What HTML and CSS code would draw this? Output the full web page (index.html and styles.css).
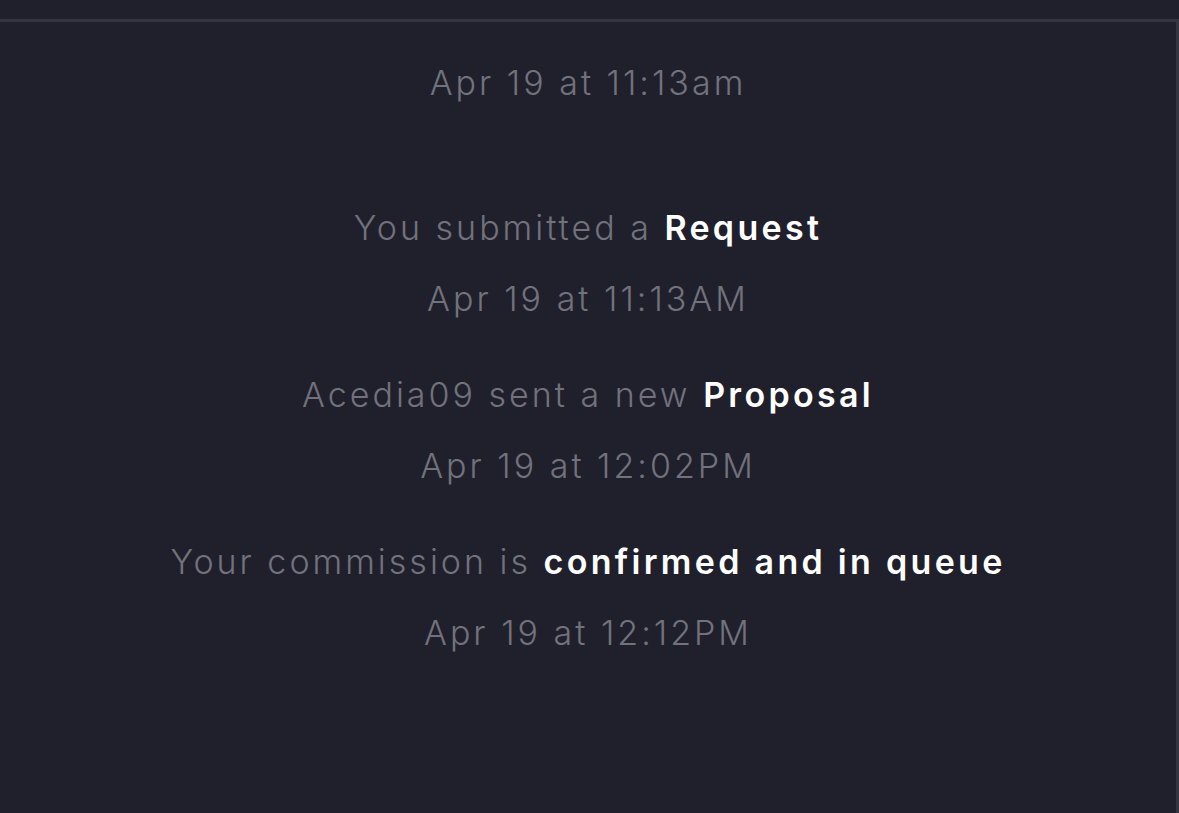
FILE: index.html
```html
<!DOCTYPE html>
<html>
<head>
<meta charset="utf-8">
<link rel="stylesheet" href="styles.css">
</head>
<body>
<div class="topbar"></div>
<div class="panel">
  <div class="stamp">Apr 19 at 11:13am</div>
  <div class="events">
    <div class="event">
      <div class="msg">You submitted a <b>Request</b></div>
      <div class="stamp">Apr 19 at 11:13AM</div>
    </div>
    <div class="event">
      <div class="msg">Acedia09 sent a new <b>Proposal</b></div>
      <div class="stamp">Apr 19 at 12:02PM</div>
    </div>
    <div class="event">
      <div class="msg">Your commission is <b>confirmed and in queue</b></div>
      <div class="stamp">Apr 19 at 12:12PM</div>
    </div>
  </div>
</div>
</body>
</html>
```
FILE: styles.css
```css
html, body {
  margin: 0;
  padding: 0;
  height: 100%;
  background: #20202c;
  overflow: hidden;
}
body {
  display: flex;
  flex-direction: column;
  font-family: Inter, "Liberation Sans", sans-serif;
  color: #72727c;
}
.topbar {
  height: 19px;
  flex: none;
}
.panel {
  flex: 1;
  border-top: 3px solid #343541;
  border-right: 3px solid #343541;
  display: flex;
  flex-direction: column;
  align-items: center;
  padding-top: 37px;
}
.stamp, .msg {
  font-size: 34px;
  line-height: 48px;
  font-weight: 300;
  letter-spacing: 3px;
  white-space: nowrap;
}
.msg b {
  color: #ffffff;
  font-weight: 600;
  letter-spacing: 3.3px;
}
.events {
  margin-top: 97px;
  display: flex;
  flex-direction: column;
  align-items: center;
  gap: 48px;
}
.event {
  display: flex;
  flex-direction: column;
  align-items: center;
  gap: 23px;
}
```
